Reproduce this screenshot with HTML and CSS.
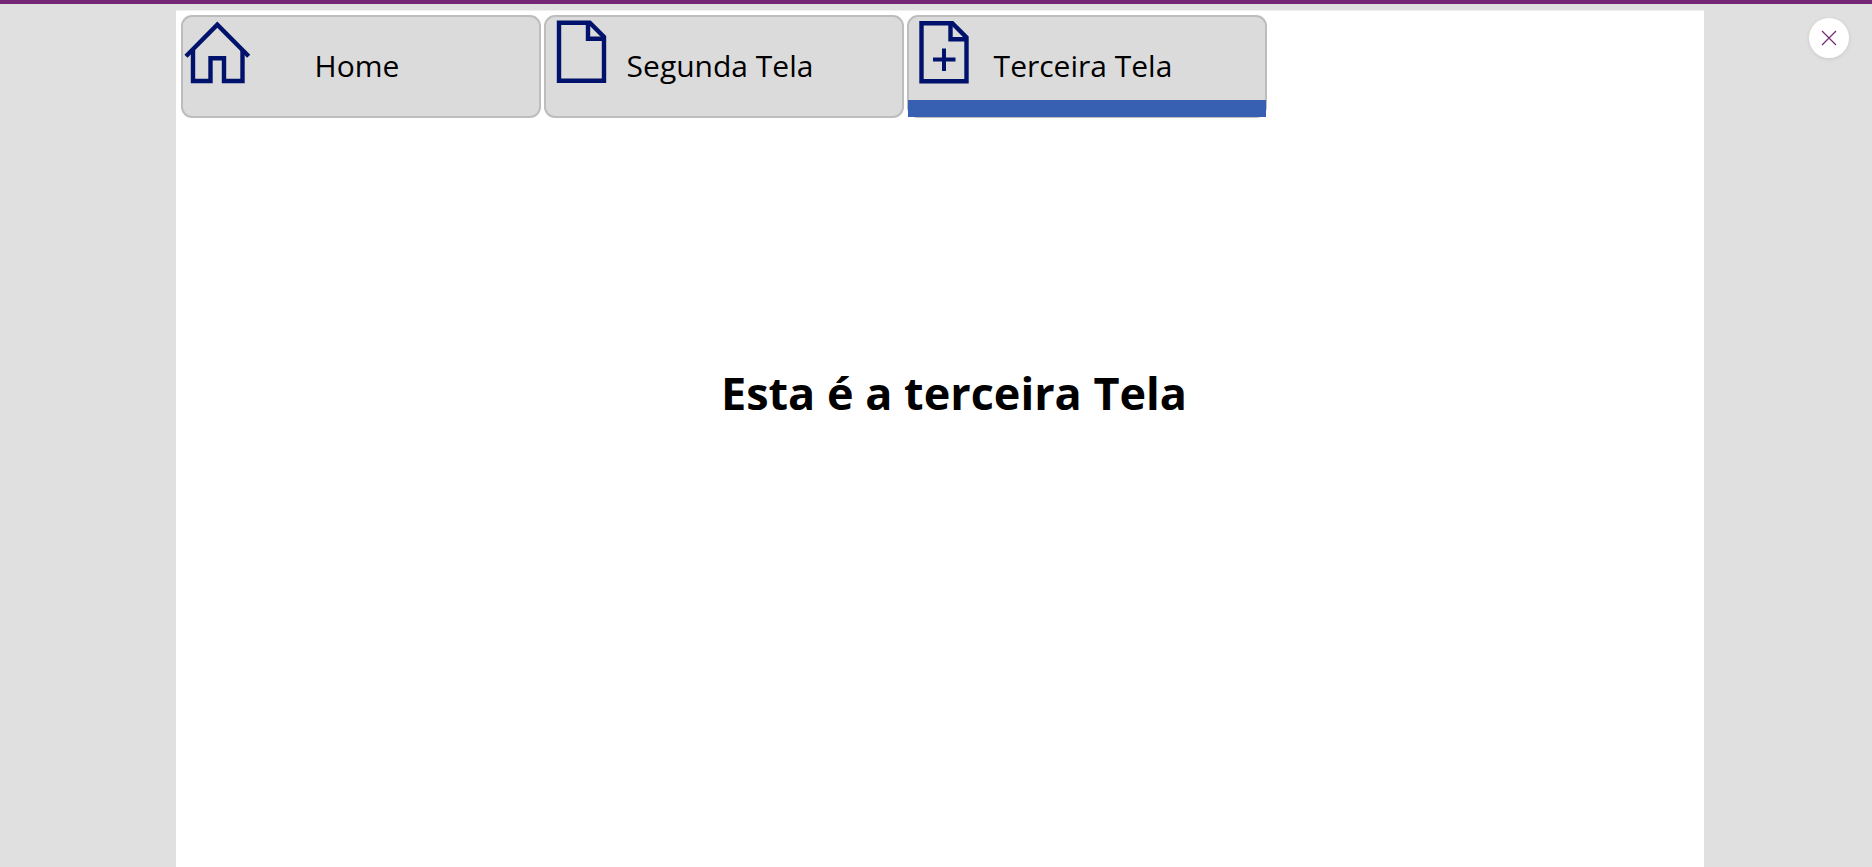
FILE: index.html
```html
<!DOCTYPE html>
<html lang="pt-BR">
<head>
  <meta charset="utf-8">
  <title>Terceira Tela</title>
  <link rel="stylesheet" href="styles.css">
</head>
<body>
  <button class="close" type="button" aria-label="Fechar">
    <svg class="close-icon" viewBox="0 0 16 16" aria-hidden="true"><path d="M1 1L15 15M15 1L1 15"/></svg>
  </button>
  <main class="stage">
    <nav class="tabs">
      <button class="tab" type="button">
        <svg class="icon icon-home" viewBox="0 0 67 65" aria-hidden="true">
          <path d="M2 36.2L33.3 4.7L64.7 36.2"/>
          <path d="M9 30V61H26.5V38.2H40V61H58.5V30"/>
        </svg>
        <span>Home</span>
      </button>
      <button class="tab" type="button">
        <svg class="icon icon-page" viewBox="0 0 53 66" aria-hidden="true">
          <path d="M4 3.8H34.8L49 18V61.8H4Z"/>
          <path d="M33 4V19.8H49"/>
        </svg>
        <span>Segunda Tela</span>
      </button>
      <button class="tab tab-active" type="button" aria-current="page">
        <svg class="icon icon-page" viewBox="0 0 53 66" aria-hidden="true">
          <path d="M3.5 4.3H34.3L48.5 18.5V62.3H3.5Z"/>
          <path d="M32.5 4.5V20.3H48.5"/>
          <path class="plus" d="M15 40.5H37.5M26 29.5V52"/>
        </svg>
        <span>Terceira Tela</span>
      </button>
    </nav>
    <h1 class="title">Esta é a terceira Tela</h1>
  </main>
</body>
</html>
```
FILE: styles.css
```css
* {
  box-sizing: border-box;
}

body {
  display: flex;
  min-height: 100vh;
  margin: 0;
  padding: 6px 168px 0 176px;
  border-top: 4px solid #742774;
  background: #e0e0e0;
  color: #000;
  font-family: "Open Sans", "Noto Sans", sans-serif;
}

.stage {
  flex: 1;
  padding: 4px 5px;
  border-top: 1px solid #f0f0f0;
  background: #fff;
}

.tabs {
  display: flex;
  gap: 3px;
}

.tab {
  position: relative;
  flex: 0 1 360px;
  padding: 28px 8px 30px 0;
  border: 2px solid #bdbdbd;
  border-radius: 11px;
  background: #dbdbdb;
  color: #000;
  font-family: inherit;
  font-size: 30px;
  font-weight: 400;
  line-height: 41px;
  text-align: center;
}

.tab-active::after {
  content: "";
  position: absolute;
  right: -1px;
  bottom: -1px;
  left: -1px;
  height: 17px;
  background: #3860b2;
}

.icon {
  position: absolute;
  fill: none;
  stroke: #00126b;
  stroke-width: 4.4;
}

.plus {
  stroke-width: 4;
}

.icon-home {
  top: 3px;
  left: 1px;
  width: 67px;
  height: 65px;
}

.icon-page {
  top: 2px;
  left: 9px;
  width: 53px;
  height: 66px;
}

.title {
  margin: 245px 0 0;
  padding-left: 28px;
  font-size: 45px;
  font-weight: 700;
  line-height: 60px;
  text-align: center;
}

.close {
  position: absolute;
  top: 18px;
  right: 23px;
  display: flex;
  align-items: center;
  justify-content: center;
  width: 40px;
  height: 40px;
  padding: 0;
  border: 0;
  border-radius: 50%;
  background: #fff;
  box-shadow: 0 1px 4px rgba(0, 0, 0, 0.1);
}

.close-icon {
  width: 16px;
  height: 16px;
  fill: none;
  stroke: #742774;
  stroke-width: 1.2;
}
```
